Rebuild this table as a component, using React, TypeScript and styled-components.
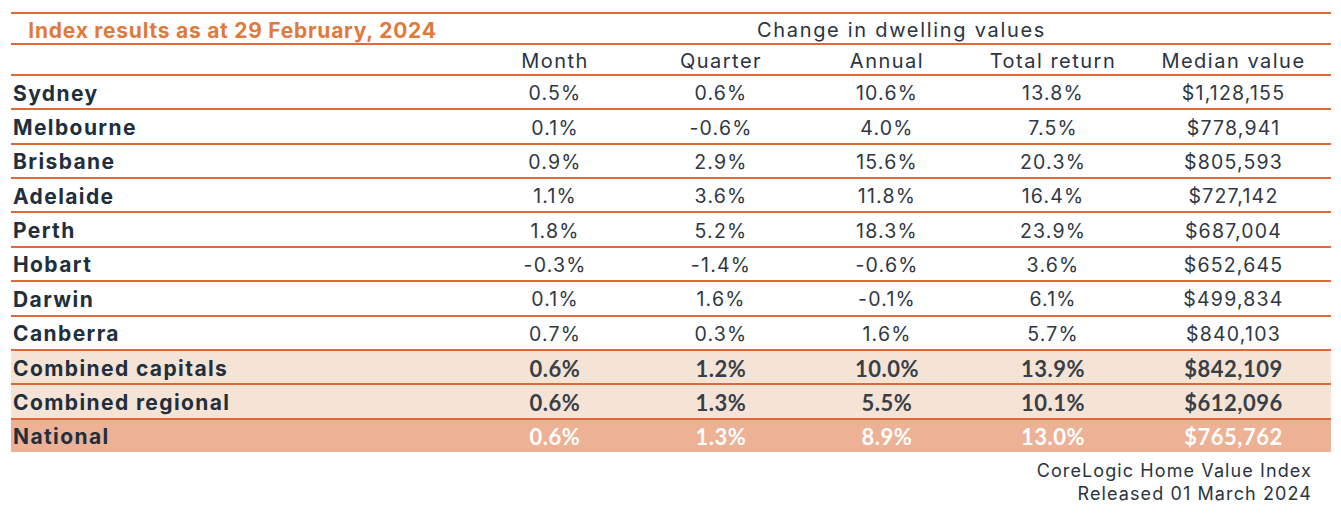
import * as React from "react";
import styled, { createGlobalStyle } from "styled-components";

const GlobalStyle = createGlobalStyle`
  html, body {
    margin: 0;
    padding: 0;
    background: #ffffff;
  }
`;

const ORANGE_LINE = "#df6a37";
const INK = "#212f3d";

interface Row {
  label: string;
  month: string;
  quarter: string;
  annual: string;
  total: string;
  median: string;
}

type Kind = "plain" | "combined" | "national";

const cities: Row[] = [
  { label: "Sydney", month: "0.5%", quarter: "0.6%", annual: "10.6%", total: "13.8%", median: "$1,128,155" },
  { label: "Melbourne", month: "0.1%", quarter: "-0.6%", annual: "4.0%", total: "7.5%", median: "$778,941" },
  { label: "Brisbane", month: "0.9%", quarter: "2.9%", annual: "15.6%", total: "20.3%", median: "$805,593" },
  { label: "Adelaide", month: "1.1%", quarter: "3.6%", annual: "11.8%", total: "16.4%", median: "$727,142" },
  { label: "Perth", month: "1.8%", quarter: "5.2%", annual: "18.3%", total: "23.9%", median: "$687,004" },
  { label: "Hobart", month: "-0.3%", quarter: "-1.4%", annual: "-0.6%", total: "3.6%", median: "$652,645" },
  { label: "Darwin", month: "0.1%", quarter: "1.6%", annual: "-0.1%", total: "6.1%", median: "$499,834" },
  { label: "Canberra", month: "0.7%", quarter: "0.3%", annual: "1.6%", total: "5.7%", median: "$840,103" },
];

const summary: (Row & { kind: Kind })[] = [
  { kind: "combined", label: "Combined capitals", month: "0.6%", quarter: "1.2%", annual: "10.0%", total: "13.9%", median: "$842,109" },
  { kind: "combined", label: "Combined regional", month: "0.6%", quarter: "1.3%", annual: "5.5%", total: "10.1%", median: "$612,096" },
  { kind: "national", label: "National", month: "0.6%", quarter: "1.3%", annual: "8.9%", total: "13.0%", median: "$765,762" },
];

const Page = styled.div`
  padding: 12px 10px 0 11px;
  font-family: Inter, "Liberation Sans", sans-serif;
  color: ${INK};
`;

const Table = styled.div`
  width: 1320px;
  display: flex;
  flex-direction: column;
`;

const Grid = styled.div`
  display: grid;
  grid-template-columns: 461px 166px 166px 166px 166px 1fr;
  align-items: center;
  box-sizing: border-box;
  border-top: 2px solid ${ORANGE_LINE};
`;

const TitleRow = styled(Grid)`
  height: 31px;
`;

const HeaderRow = styled(Grid)`
  height: 31px;
`;

const BodyRow = styled(Grid)<{ $kind: Kind }>`
  height: 34.36px;
  background: ${(p) =>
    p.$kind === "national" ? "#edb195" : p.$kind === "combined" ? "#f5e3d6" : "transparent"};
  border-top-color: ${(p) => (p.$kind === "plain" ? ORANGE_LINE : "#db6a38")};
`;

const Title = styled.div`
  color: #e07a3c;
  font-weight: 700;
  font-size: 21px;
  letter-spacing: 0.75px;
  text-align: center;
  padding-top: 3px;
  padding-right: 18px;
`;

const GroupTitle = styled.div`
  grid-column: 2 / span 5;
  text-align: center;
  font-size: 20px;
  letter-spacing: 1.7px;
  font-weight: 400;
  color: #2a3442;
  padding-top: 2px;
`;

const ColHead = styled.div`
  text-align: center;
  font-size: 20px;
  letter-spacing: 1.5px;
  font-weight: 400;
  color: #2a3442;
  padding-top: 2px;
`;

const Label = styled.div`
  padding-left: 2px;
  font-size: 21px;
  letter-spacing: 1.4px;
  font-weight: 700;
  color: ${INK};
  padding-top: 2px;
`;

const Cell = styled.div<{ $kind: Kind }>`
  text-align: center;
  padding-top: 2px;
  font-family: ${(p) => (p.$kind === "plain" ? 'Inter, "Liberation Sans", sans-serif' : 'Lato, "Liberation Sans", sans-serif')};
  font-size: ${(p) => (p.$kind === "plain" ? "19.5px" : "22px")};
  letter-spacing: ${(p) => (p.$kind === "plain" ? "1.2px" : "0.5px")};
  font-weight: ${(p) => (p.$kind === "plain" ? 400 : 700)};
  color: ${(p) => (p.$kind === "national" ? "#ffffff" : p.$kind === "combined" ? "#383f47" : "#2f3844")};
`;

const Footer = styled.div`
  width: 1301px;
  margin-top: 7px;
  text-align: right;
  font-size: 18px;
  letter-spacing: 1.1px;
  line-height: 23px;
  color: #2a3442;
`;

const DataRow = ({ row, kind }: { row: Row; kind: Kind }) => (
  <BodyRow $kind={kind}>
    <Label>{row.label}</Label>
    <Cell $kind={kind}>{row.month}</Cell>
    <Cell $kind={kind}>{row.quarter}</Cell>
    <Cell $kind={kind}>{row.annual}</Cell>
    <Cell $kind={kind}>{row.total}</Cell>
    <Cell $kind={kind}>{row.median}</Cell>
  </BodyRow>
);

export default function App() {
  return (
    <Page>
      <GlobalStyle />
      <Table>
        <TitleRow>
          <Title>Index results as at 29 February, 2024</Title>
          <GroupTitle>Change in dwelling values</GroupTitle>
        </TitleRow>
        <HeaderRow>
          <div />
          <ColHead>Month</ColHead>
          <ColHead>Quarter</ColHead>
          <ColHead>Annual</ColHead>
          <ColHead>Total return</ColHead>
          <ColHead>Median value</ColHead>
        </HeaderRow>
        {cities.map((c) => (
          <DataRow key={c.label} row={c} kind="plain" />
        ))}
        {summary.map((s) => (
          <DataRow key={s.label} row={s} kind={s.kind} />
        ))}
      </Table>
      <Footer>
        CoreLogic Home Value Index
        <br />
        Released 01 March 2024
      </Footer>
    </Page>
  );
}
